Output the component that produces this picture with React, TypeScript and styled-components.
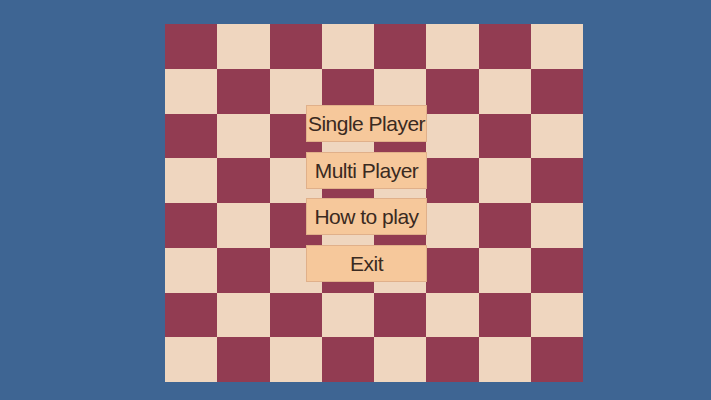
import React from 'react'
import styled, { createGlobalStyle } from 'styled-components'

const GlobalStyle = createGlobalStyle`
  html, body {
    margin: 0;
    padding: 0;
    background: #3e6593;
    font-family: 'Liberation Sans', Arial, sans-serif;
  }
`

const Screen = styled.div`
  width: 711px;
  height: 400px;
  padding: 24px 0 0 165px;
  box-sizing: border-box;
  background: #3e6593;
`

const Board = styled.div`
  position: relative;
  width: 418px;
  height: 358px;
  display: grid;
  grid-template-columns: repeat(8, 1fr);
  grid-template-rows: repeat(8, 1fr);
`

const Cell = styled.div<{ $dark: boolean }>`
  background: ${(p) => (p.$dark ? '#923c52' : '#efd6bf')};
`

const Menu = styled.div`
  position: absolute;
  left: 141px;
  top: 81px;
  width: 121px;
  display: flex;
  flex-direction: column;
  gap: 9.5px;
`

const MenuButton = styled.button`
  height: 37px;
  padding: 1px 0 0;
  background: #f6c89b;
  border: 1px solid #e0b08a;
  color: #3a2a21;
  font-family: 'Liberation Sans', Arial, sans-serif;
  font-size: 21px;
  letter-spacing: -0.5px;
  white-space: nowrap;
  cursor: pointer;
`

const items = ['Single Player', 'Multi Player', 'How to play', 'Exit']

export default function App() {
  const cells = []
  for (let r = 0; r < 8; r++) {
    for (let c = 0; c < 8; c++) {
      cells.push(<Cell key={`${r}-${c}`} $dark={(r + c) % 2 === 0} />)
    }
  }
  return (
    <>
      <GlobalStyle />
      <Screen>
        <Board>
          {cells}
          <Menu>
            {items.map((label) => (
              <MenuButton key={label}>{label}</MenuButton>
            ))}
          </Menu>
        </Board>
      </Screen>
    </>
  )
}
